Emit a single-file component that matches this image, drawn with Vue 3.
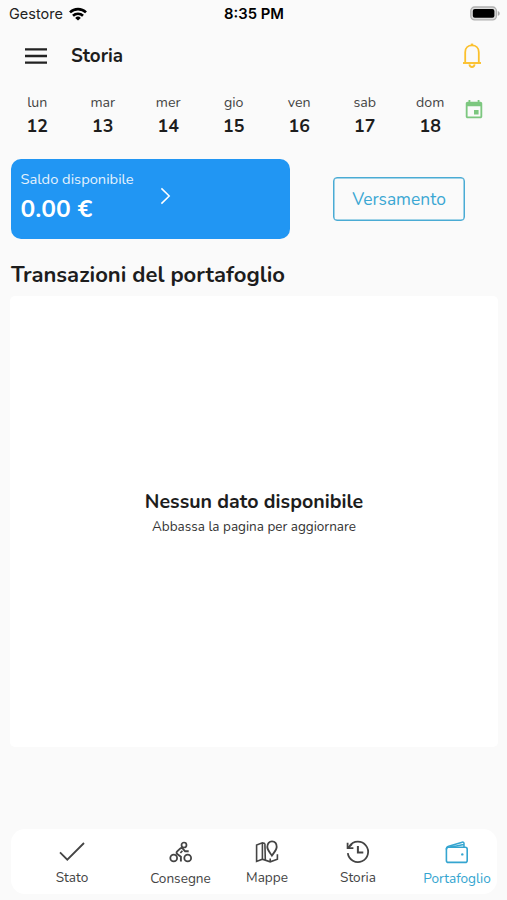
<template>
  <main class="screen">
    <div class="status">
      <div class="carrier">
        <span>Gestore</span>
        <svg width="18" height="14" viewBox="0 0 18 14" fill="none" stroke="#000" stroke-width="2.6">
          <path d="M1 5.4a11.4 11.4 0 0 1 16 0" />
          <path d="M4 8.8a7.2 7.2 0 0 1 10 0" />
          <path d="M9 13.6 6.2 10.9a4 4 0 0 1 5.6 0z" fill="#000" stroke="none" />
        </svg>
      </div>
      <div class="time">8:35 PM</div>
      <svg class="battery" width="32" height="15" viewBox="0 0 32 15">
        <rect x="1.8" y="1" width="25.6" height="12.8" rx="3.8" fill="#ddd" stroke="#b0b0b0" stroke-width="1.3" />
        <rect x="3.8" y="3" width="21.6" height="8.8" rx="2" fill="#000" />
        <path d="M28.8 5v4.8c1.3-.5 1.9-1.4 1.9-2.4s-.6-1.9-1.9-2.4z" fill="#a9a9a9" />
      </svg>
    </div>

    <header class="header">
      <svg width="22" height="16" viewBox="0 0 22 16" stroke="#222" stroke-width="2.3">
        <path d="M0 1.4h22M0 8h22M0 14.6h22" />
      </svg>
      <h1 class="page-title">Storia</h1>
      <svg class="bell" width="20" height="26" viewBox="0 0 20 26" fill="none" stroke="#fbc02d" stroke-width="1.8">
        <path d="M3.2 19.6V9.2C3.2 5 6.2 2.4 10 2.4s6.8 2.6 6.8 6.8v10.4" />
        <path d="M1 20h18" stroke-width="1.9" />
        <path d="M7.4 21.4c.2 1.6 1 2.6 2.6 2.6s2.4-1 2.6-2.6" />
        <path d="M10 .6v2" stroke-width="2.4" />
      </svg>
    </header>

    <section class="week">
      <div v-for="day in days" :key="day.number" class="day">
        <span class="day-name">{{ day.name }}</span>
        <span class="day-number">{{ day.number }}</span>
      </div>
      <svg class="calendar" width="22" height="22" viewBox="0 0 24 24" fill="#7cc77f">
        <path d="M17 12h-5v5h5v-5zM16 1v2H8V1H6v2H5c-1.11 0-1.99.9-1.99 2L3 19c0 1.1.89 2 2 2h14c1.1 0 2-.9 2-2V5c0-1.1-.9-2-2-2h-1V1h-2zm3 18H5V8h14v11z" />
      </svg>
    </section>

    <section class="wallet">
      <div class="balance">
        <div class="balance-info">
          <span class="balance-label">Saldo disponibile</span>
          <span class="balance-value">0.00 €</span>
        </div>
        <svg width="12" height="18" viewBox="0 0 12 18" fill="none" stroke="#fff" stroke-width="1.5">
          <path d="m1.4 1.4 7.8 7.6-7.8 7.6" />
        </svg>
      </div>
      <button class="deposit">Versamento</button>
    </section>

    <h2 class="section-title">Transazioni del portafoglio</h2>

    <section class="panel">
      <p class="empty-title">Nessun dato disponibile</p>
      <p class="empty-text">Abbassa la pagina per aggiornare</p>
    </section>

    <nav class="tabs">
      <div v-for="tab in tabs" :key="tab.id" :class="['tab', tab.id]">
        <svg width="28" height="26" viewBox="0 0 28 26" fill="none" stroke="currentColor" stroke-width="1.8">
          <path v-if="tab.id === 'stato'" d="m2 13.4 7.3 7.3L26 4" />
          <g v-else-if="tab.id === 'consegne'">
            <circle cx="6.7" cy="19" r="3.4" />
            <circle cx="20.7" cy="19" r="3.4" />
            <circle cx="17" cy="6" r="2.5" stroke-width="1.7" />
            <path d="M13.9 22.4v-4.6l-3.4-2.5c-1.2-.9-1.2-2-.3-2.9l3.2-3c.8-.7 1.7-.6 2.4.2l2.3 2.7h3.6" stroke-width="1.9" />
            <path d="m15.4 11.8-2 2.2" stroke-width="1.7" />
          </g>
          <g v-else-if="tab.id === 'mappe'">
            <path d="M11.9 4.6 9.4 3.8 3.6 6v16.4l5.8-2.2 7.8 2.6 7.2-2.6v-5M9.4 4v16M17.2 22.4v-3M11.9 4.4l.4 16" stroke-width="1.6" />
            <path d="M18.9 16.6c-1.7-2.8-4.6-5.4-4.6-8.6 0-3.6 2-5.7 4.7-5.7S23.7 4.4 23.7 8c0 3.2-3.1 5.8-4.8 8.6z" />
          </g>
          <g v-else-if="tab.id === 'storia'">
            <path d="M5.6 7A10.2 10.2 0 1 1 3.8 14.2" />
            <path d="M3.6 3.8v5.4h5.8M3.8 9.1 8 5.2" />
            <path d="M13.9 6.9v6.6h5.4" stroke-width="2" />
          </g>
          <g v-else stroke-width="1.6">
            <rect x="3.4" y="8.2" width="20.8" height="15.2" rx="2" />
            <path d="M3.4 10.4c0-1.8.6-2.6 2.3-3.1l13.5-4.1c1.1-.3 1.8.3 1.8 1.4v3.3M7.4 8.2l13.2-2.6" stroke-width="1.5" />
            <circle cx="19.3" cy="15.4" r="1.2" fill="currentColor" stroke="none" />
          </g>
        </svg>
        <span class="tab-label">{{ tab.label }}</span>
      </div>
    </nav>
  </main>
</template>

<script setup>
const days = [
  { name: "lun", number: 12 },
  { name: "mar", number: 13 },
  { name: "mer", number: 14 },
  { name: "gio", number: 15 },
  { name: "ven", number: 16 },
  { name: "sab", number: 17 },
  { name: "dom", number: 18 },
];

const tabs = [
  { id: "stato", label: "Stato" },
  { id: "consegne", label: "Consegne" },
  { id: "mappe", label: "Mappe" },
  { id: "storia", label: "Storia" },
  { id: "portafoglio", label: "Portafoglio" },
];
</script>

<style>
body {
  background: #fafafa;
}
</style>

<style scoped>
.screen {
  display: flex;
  flex-direction: column;
  box-sizing: border-box;
  width: 507px;
  height: 900px;
  padding-bottom: 6px;
  overflow: hidden;
  background: #fafafa;
  color: #1d1d1d;
  font-family: Nunito, Lato, "Open Sans", sans-serif;
}

h1,
h2,
p {
  margin: 0;
}

svg {
  display: block;
  flex: none;
}

.status {
  display: grid;
  grid-template-columns: 1fr auto 1fr;
  align-items: center;
  height: 27px;
  padding: 0 6px 0 9px;
  font-family: Inter, sans-serif;
  color: #000;
}

.carrier {
  display: flex;
  align-items: center;
  gap: 6px;
  font-size: 14.5px;
  color: #222;
}

.time {
  margin-right: 2px;
  font-size: 14.8px;
  font-weight: 600;
}

.battery {
  justify-self: end;
}

.header {
  display: flex;
  align-items: center;
  height: 58px;
  padding: 0 25px;
}

.page-title {
  margin-left: 24px;
  font-size: 18.8px;
  font-weight: 700;
}

.bell {
  margin-left: auto;
}

.week {
  display: flex;
  height: 73.5px;
  padding: 8px 0 0 4.5px;
  box-sizing: border-box;
}

.day {
  display: flex;
  flex-direction: column;
  align-items: center;
  width: 65.5px;
}

.day-name {
  font-size: 14.2px;
  line-height: 19px;
  color: #444;
}

.day-number {
  margin-top: 2px;
  font-size: 17.8px;
  line-height: 24px;
  font-weight: 700;
}

.calendar {
  margin-top: 6px;
}

.wallet {
  display: flex;
  align-items: center;
  height: 80.5px;
  padding-left: 11px;
}

.balance {
  display: flex;
  box-sizing: border-box;
  width: 279px;
  height: 100%;
  padding: 9.5px;
  border-radius: 10px;
  background: #2196f3;
  color: #fff;
}

.balance svg {
  margin-top: 19px;
}

.balance-info {
  display: flex;
  flex-direction: column;
  width: 139.5px;
}

.balance-label {
  font-size: 14.7px;
  line-height: 22px;
  opacity: 0.88;
}

.balance-value {
  margin-top: 2px;
  font-size: 24.6px;
  line-height: 34px;
  font-weight: 700;
}

.deposit {
  width: 132px;
  height: 44px;
  margin-left: 43px;
  padding: 0;
  border: 1.5px solid #49abd4;
  border-radius: 4px;
  box-shadow: inset 0 0 0 0.5px #49abd4;
  background: transparent;
  color: #3ba7d3;
  font-family: inherit;
  font-size: 17.4px;
}

.section-title {
  height: 57px;
  padding-left: 11px;
  box-sizing: border-box;
  padding-top: 21px;
  font-size: 22px;
  line-height: 30px;
  font-weight: 700;
}

.panel {
  display: flex;
  flex-direction: column;
  align-items: center;
  box-sizing: border-box;
  height: 451px;
  margin: 0 9px 0 10px;
  padding-top: 192px;
  border-radius: 5px;
  background: #fff;
}

.empty-title {
  font-size: 19.6px;
  line-height: 28px;
  font-weight: 700;
}

.empty-text {
  font-size: 13.5px;
  line-height: 22px;
  color: #333;
}

.tabs {
  display: grid;
  grid-template-columns: 122px 95px 78px 104px 94px;
  box-sizing: border-box;
  height: 65px;
  margin: auto 10px 0 11px;
  padding-top: 10px;
  border-radius: 14px;
  background: #fff;
  color: #444;
}

.tab {
  display: flex;
  flex-direction: column;
  align-items: center;
}

.tab-label {
  margin-top: 3px;
  font-size: 13.6px;
  line-height: 20px;
}

.consegne .tab-label,
.portafoglio .tab-label {
  margin-top: 4px;
}

.portafoglio {
  color: #35a5d0;
}
</style>
